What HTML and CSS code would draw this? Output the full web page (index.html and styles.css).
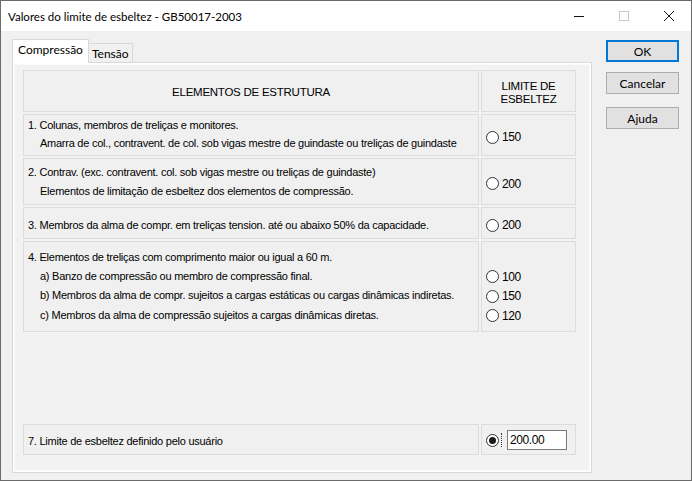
FILE: index.html
```html
<!DOCTYPE html>
<html lang="pt">
<head>
    <meta charset="UTF-8">
    <title>Valores do limite de esbeltez</title>
    <link rel="stylesheet" href="styles.css">
</head>
<body>
    <div class="window">
        <div class="titlebar">
            <span class="title">Valores do limite de esbeltez - GB50017-2003</span>
            <div class="controls">
                <span class="ctl">
                    <svg width="10" height="10" viewBox="0 0 10 10"><path d="M0 5.5h10" stroke="#111" stroke-width="1"/></svg>
                </span>
                <span class="ctl">
                    <svg width="10" height="10" viewBox="0 0 10 10"><rect x="0.5" y="0.5" width="9" height="9" fill="none" stroke="#c8c8c8"/></svg>
                </span>
                <span class="ctl">
                    <svg width="10" height="10" viewBox="0 0 10 10"><path d="M0 0L10 10M10 0L0 10" stroke="#111" stroke-width="1"/></svg>
                </span>
            </div>
        </div>

        <div class="client">
            <div class="tab-area">
                <div class="tab-strip">
                    <div class="tab active">Compressão</div>
                    <div class="tab">Tensão</div>
                </div>
                <div class="tab-panel">
                    <div class="grid">
                        <div class="cell head">ELEMENTOS DE ESTRUTURA</div>
                        <div class="cell head head-limit">LIMITE DE<br>ESBELTEZ</div>

                        <div class="cell text r1">
                            <div>1. Colunas, membros de treliças e monitores.</div>
                            <div class="sub">Amarra de col., contravent. de col. sob vigas mestre de guindaste ou treliças de guindaste</div>
                        </div>
                        <div class="cell opts"><label class="radio"><span class="dot"></span>150</label></div>

                        <div class="cell text r2">
                            <div>2. Contrav. (exc. contravent. col. sob vigas mestre ou treliças de guindaste)</div>
                            <div class="sub">Elementos de limitação de esbeltez dos elementos de compressão.</div>
                        </div>
                        <div class="cell opts"><label class="radio"><span class="dot"></span>200</label></div>

                        <div class="cell text r3">
                            <div>3. Membros da alma de compr. em treliças tension. até ou abaixo 50% da capacidade.</div>
                        </div>
                        <div class="cell opts"><label class="radio"><span class="dot"></span>200</label></div>

                        <div class="cell text r4">
                            <div>4. Elementos de treliças com comprimento maior ou igual a 60 m.</div>
                            <div class="sub">a) Banzo de compressão ou membro de compressão final.</div>
                            <div class="sub">b) Membros da alma de compr. sujeitos a cargas estáticas ou cargas dinâmicas indiretas.</div>
                            <div class="sub">c) Membros da alma de compressão sujeitos a cargas dinâmicas diretas.</div>
                        </div>
                        <div class="cell opts multi">
                            <label class="radio"><span class="dot"></span>100</label>
                            <label class="radio"><span class="dot"></span>150</label>
                            <label class="radio"><span class="dot"></span>120</label>
                        </div>
                    </div>

                    <div class="grid user-row">
                        <div class="cell text r7">
                            <div>7. Limite de esbeltez definido pelo usuário</div>
                        </div>
                        <div class="cell r7-opts">
                            <span class="dot checked"></span>
                            <input class="value-box" type="text" value="200.00">
                        </div>
                    </div>
                </div>
            </div>

            <div class="buttons">
                <button class="btn default">OK</button>
                <button class="btn">Cancelar</button>
                <button class="btn gap">Ajuda</button>
            </div>
        </div>
    </div>
</body>
</html>
```

FILE: styles.css
```css
:root {
    --face: #f0f0f0;
    --line: #dcdcdc;
    --text: #000;
}

html, body {
    margin: 0;
    padding: 0;
}

body {
    width: 692px;
    height: 481px;
    overflow: hidden;
    background: var(--face);
    font-family: "Liberation Sans", Arial, sans-serif;
    color: var(--text);
}

.window {
    box-sizing: border-box;
    width: 692px;
    height: 481px;
    border: 1px solid #6b6b6b;
    background: var(--face);
}

.titlebar {
    height: 30px;
    background: #fff;
    display: flex;
    align-items: center;
    justify-content: space-between;
}

.title {
    padding-left: 7px;
    font-family: Lato, sans-serif;
    font-size: 11.5px;
    color: #000;
}

.controls {
    display: flex;
    height: 100%;
}

.ctl {
    width: 45px;
    display: flex;
    align-items: center;
    justify-content: center;
}

.client {
    display: flex;
    padding: 8px 0 0 11px;
}

/* tabs */
.tab-strip {
    display: flex;
    align-items: flex-end;
    height: 23px;
    padding-left: 1px;
    font-family: Lato, sans-serif;
    font-size: 12px;
}

.tab {
    box-sizing: border-box;
    height: 19px;
    padding: 0 3px;
    border: 1px solid #d9d9d9;
    border-bottom: none;
    background: #f0f0f0;
    line-height: 19px;
    margin-left: -1px;
}

.tab.active {
    background: #fff;
    padding: 0 5px;
    line-height: 20px;
    position: relative;
    z-index: 1;
    margin-bottom: -1px;
    height: 24px;
}

.tab-panel {
    box-sizing: border-box;
    width: 580px;
    height: 411px;
    border: 1px solid #d9d9d9;
    box-shadow: inset 0 0 0 1px #fff, inset 0 0 0 2px #fafafa;
    background: #f2f2f2;
    padding: 7px 0 0 10px;
}

/* table of elements */
.grid {
    display: grid;
    grid-template-columns: 456px 95px;
    grid-template-rows: 42px 42px 47px 32px 91px;
    gap: 2px;
    font-size: 11px;
    letter-spacing: -0.25px;
}

.grid.user-row {
    grid-template-rows: 31px;
    margin-top: 92px;
}

.cell {
    box-sizing: border-box;
    border: 1px solid var(--line);
    background: #f0f0f0;
}

.head {
    display: flex;
    align-items: center;
    justify-content: center;
    padding-top: 2px;
    font-size: 11.5px;
}

.head-limit {
    text-align: center;
    line-height: 12.5px;
    padding-top: 3px;
}

.text {
    padding: 0 4px;
    line-height: 17.5px;
}

.text .sub {
    padding-left: 12px;
}

.r1 { padding-top: 2px; }
.r2 { padding-top: 4px; line-height: 18.5px; }
.r3 { padding-top: 9px; }
.r4 { padding-top: 6px; line-height: 19.2px; }
.r7 { padding-top: 8px; }

.opts {
    display: flex;
    flex-direction: column;
    justify-content: center;
    padding-left: 4px;
    padding-top: 4px;
}

.opts.multi {
    justify-content: flex-start;
    padding-top: 28px;
    gap: 6.5px;
}

.radio {
    display: flex;
    align-items: center;
    gap: 3px;
    font-size: 12px;
    letter-spacing: -0.4px;
    height: 13px;
}

.dot {
    box-sizing: border-box;
    display: inline-block;
    flex: none;
    width: 13px;
    height: 13px;
    border: 1px solid #333;
    border-radius: 50%;
    background: #fff;
    position: relative;
}

.dot.checked::after {
    content: "";
    position: absolute;
    left: 2px;
    top: 2px;
    width: 7px;
    height: 7px;
    border-radius: 50%;
    background: #1a1a1a;
}

.r7-opts {
    display: flex;
    align-items: center;
    padding-left: 4px;
    padding-top: 1px;
}

.r7-opts .dot::before {
    content: "";
    position: absolute;
    right: -4px;
    top: -2px;
    height: 14px;
    border-right: 1px dotted #333;
}

.value-box {
    box-sizing: border-box;
    width: 60px;
    height: 20px;
    margin-left: 8px;
    border: 1px solid #7a7a7a;
    background: #fff;
    font-family: "Liberation Sans", Arial, sans-serif;
    font-size: 12px;
    letter-spacing: -0.4px;
    padding: 0 2px;
}

/* dialog buttons */
.buttons {
    display: flex;
    flex-direction: column;
    margin-left: 14px;
    padding-top: 1px;
}

.btn {
    box-sizing: border-box;
    width: 73px;
    height: 22px;
    margin-bottom: 10px;
    border: 1px solid #adadad;
    background: #e1e1e1;
    font-family: Lato, sans-serif;
    font-size: 12px;
    color: #000;
    padding: 0;
}

.btn.default {
    border: 2px solid #0078d7;
}

.btn.gap {
    margin-top: 3px;
}
```
